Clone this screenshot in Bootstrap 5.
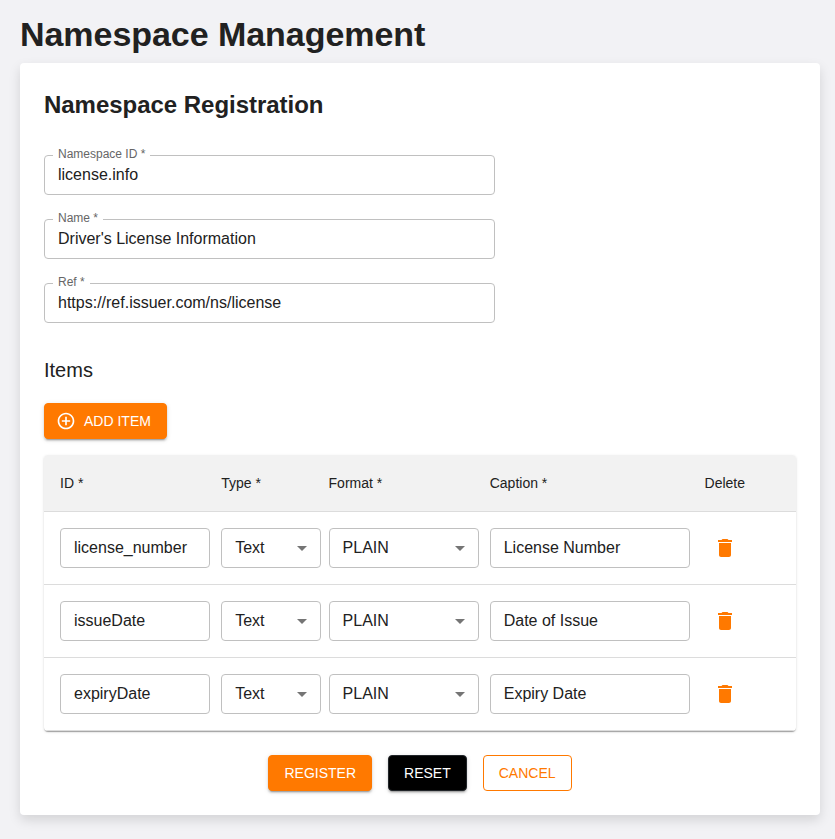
<!DOCTYPE html>
<html lang="en">
<head>
<meta charset="utf-8">
<meta name="viewport" content="width=device-width, initial-scale=1">
<title>Namespace Management</title>
<link href="https://cdn.jsdelivr.net/npm/bootstrap@5.3.0/dist/css/bootstrap.min.css" rel="stylesheet">
<style>
  body { background: #f2f2f5; color: #212121; font-family: "Liberation Sans", Arial, sans-serif; line-height: 1.5; }
  .page { padding: 13px 15px 24px 20px; }
  .page-title { font-size: 34px; line-height: 42px; font-weight: 700; margin: 0 0 8px; letter-spacing: -.05px; }
  .panel { border: 0; border-radius: 4px; padding: 24px; height: 752px; color: #212121; box-shadow: 0 5px 12px rgba(0,0,0,.13); }
  .panel-title { font-size: 24px; line-height: 36px; font-weight: 700; margin: 0 0 32px; letter-spacing: -.03px; }
  .section-title { font-size: 20px; line-height: 32px; font-weight: 400; margin: 7px 0 17px; }
  .form-control, .form-select { height: 40px; padding: 0 13px; border: 1px solid #c0c0c0; border-radius: 4px; color: #212121; font-size: 16px; line-height: 24px; }
  .form-select { background-image: url("data:image/svg+xml,%3Csvg xmlns='http://www.w3.org/2000/svg' viewBox='0 0 24 24'%3E%3Cpath fill='%23757575' d='M7 10l5 5 5-5z'/%3E%3C/svg%3E"); background-size: 24px 24px; background-position: right 6px center; }
  .outlined { width: 451px; margin-bottom: 24px; }
  .outlined label { position: absolute; left: 9px; top: -10px; padding: 0 5px; background: #fff; color: #666; font-size: 12px; line-height: 18px; }
  .btn { --bs-btn-font-size: 14px; --bs-btn-border-radius: 4px; height: 36px; padding: 0 15px; line-height: 34px; text-transform: uppercase; }
  .btn-main { --bs-btn-color: #fff; --bs-btn-bg: #ff7900; --bs-btn-border-color: #ff7900; --bs-btn-hover-color: #fff; --bs-btn-hover-bg: #e66d00; }
  .btn-line { --bs-btn-color: #ff7900; --bs-btn-border-color: #ff7900; --bs-btn-hover-color: #ff7900; --bs-btn-hover-bg: #fff4e9; }
  .add-item { padding-left: 11px; }
  .raised { box-shadow: 0 3px 1px -2px rgba(0,0,0,.2), 0 2px 2px rgba(0,0,0,.14), 0 1px 5px rgba(0,0,0,.12); }
  .items-box { width: 752px; border-radius: 4px; overflow: hidden; box-shadow: 0 2px 1px -1px rgba(0,0,0,.2), 0 1px 1px rgba(0,0,0,.14), 0 1px 3px rgba(0,0,0,.12); }
  .items { table-layout: fixed; width: 752px; margin: 0; color: #212121; --bs-table-color: #212121; }
  .items > :not(caption) > * > * { padding: 16px 0 16px 16px; border-bottom: 1px solid #dcdcdc; }
  .items > thead > tr > th { height: 56px; padding: 18px 0 16px 16px; line-height: 21px; background: #f2f2f2; font-size: 14px; font-weight: 400; vertical-align: middle; }
  .c-id, .c-format { width: 21.43%; } .c-type, .c-del { width: 14.285%; } .c-cap { width: 28.57%; }
  .w-150 { width: 150px; } .w-100p { width: 100px; } .w-200 { width: 200px; }
  .icon-btn { width: 40px; height: 40px; padding: 0; border: 0; background: none; color: #ff7900; }
</style>
<script src="https://cdn.jsdelivr.net/npm/bootstrap@5.3.0/dist/js/bootstrap.bundle.min.js"></script>
</head>
<body>
<svg class="d-none"><symbol id="trash" viewBox="0 0 24 24"><path d="M6 19c0 1.1.9 2 2 2h8c1.1 0 2-.9 2-2V7H6v12zM19 4h-3.5l-1-1h-5l-1 1H5v2h14V4z"/></symbol></svg>
<main class="page">
  <h1 class="page-title">Namespace Management</h1>
  <section class="card panel">
    <h2 class="panel-title">Namespace Registration</h2>
    <div class="outlined position-relative"><label for="nsid">Namespace ID *</label><input id="nsid" class="form-control" value="license.info"></div>
    <div class="outlined position-relative"><label for="nsname">Name *</label><input id="nsname" class="form-control" value="Driver's License Information"></div>
    <div class="outlined position-relative"><label for="nsref">Ref *</label><input id="nsref" class="form-control" value="https://ref.issuer.com/ns/license"></div>
    <h3 class="section-title">Items</h3>
    <button class="btn btn-main raised d-flex align-items-center align-self-start add-item mb-3">
      <svg class="me-2" width="20" height="20" viewBox="0 0 24 24" fill="currentColor"><path d="M13 7h-2v4H7v2h4v4h2v-4h4v-2h-4V7zm-1-5C6.48 2 2 6.48 2 12s4.480 10 10 10 10-4.480 10-10S17.520 2 12 2zm0 18c-4.410 0-8-3.590-8-8s3.590-8 8-8 8 3.590 8 8-3.590 8-8 8z"/></svg><span>Add Item</span>
    </button>
    <div class="items-box">
      <table class="table items">
        <thead><tr><th class="c-id">ID *</th><th class="c-type">Type *</th><th class="c-format">Format *</th><th class="c-cap">Caption *</th><th class="c-del">Delete</th></tr></thead>
        <tbody>
          <tr><td><input class="form-control w-150" value="license_number"></td><td><select class="form-select w-100p"><option>Text</option></select></td><td><select class="form-select w-150"><option>PLAIN</option></select></td><td><input class="form-control w-200" value="License Number"></td><td><button class="icon-btn" aria-label="Delete"><svg width="24" height="24" fill="currentColor"><use href="#trash"/></svg></button></td></tr>
          <tr><td><input class="form-control w-150" value="issueDate"></td><td><select class="form-select w-100p"><option>Text</option></select></td><td><select class="form-select w-150"><option>PLAIN</option></select></td><td><input class="form-control w-200" value="Date of Issue"></td><td><button class="icon-btn" aria-label="Delete"><svg width="24" height="24" fill="currentColor"><use href="#trash"/></svg></button></td></tr>
          <tr><td><input class="form-control w-150" value="expiryDate"></td><td><select class="form-select w-100p"><option>Text</option></select></td><td><select class="form-select w-150"><option>PLAIN</option></select></td><td><input class="form-control w-200" value="Expiry Date"></td><td><button class="icon-btn" aria-label="Delete"><svg width="24" height="24" fill="currentColor"><use href="#trash"/></svg></button></td></tr>
        </tbody>
      </table>
    </div>
    <div class="d-flex justify-content-center gap-3 mt-4">
      <button class="btn btn-main raised">Register</button>
      <button class="btn btn-dark bg-black border-black raised">Reset</button>
      <button class="btn btn-line">Cancel</button>
    </div>
  </section>
</main>
</body>
</html>
